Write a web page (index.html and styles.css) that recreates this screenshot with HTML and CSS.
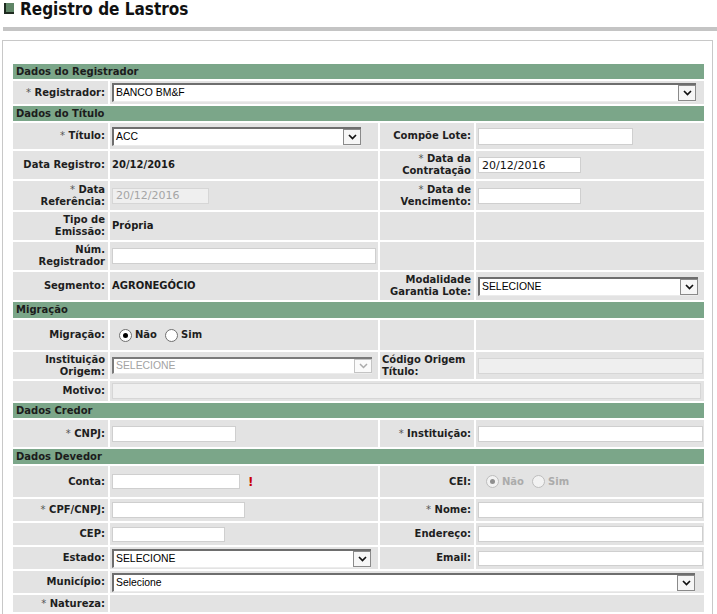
FILE: index.html
```html
<!DOCTYPE html>
<html lang="pt-BR">
<head>
<meta charset="utf-8">
<title>Registro de Lastros</title>
<link rel="stylesheet" href="styles.css">
</head>
<body>
<div class="title"><span class="ico"></span><h1>Registro de Lastros</h1></div>
<div class="rule"></div>
<div class="box">
<table class="form">
<colgroup><col class="c1"><col class="c2"><col class="c3"><col class="c4"></colgroup>
<tr class="sec h15"><td colspan="4">Dados do Registrador</td></tr>
<tr class="h23">
  <td class="lb"><span class="req">*</span> Registrador:</td>
  <td colspan="3"><div class="sel w-reg"><span class="sel-txt">BANCO BM&amp;F</span><span class="sel-btn"><svg width="9" height="6" viewBox="0 0 9 6"><path d="M1 1l3.5 3.5L8 1" fill="none" stroke="#111" stroke-width="1.7"/></svg></span></div></td>
</tr>
<tr class="sec h15"><td colspan="4">Dados do Título</td></tr>
<tr class="h26">
  <td class="lb"><span class="req">*</span> Título:</td>
  <td><div class="sel w-tit"><span class="sel-txt">ACC</span><span class="sel-btn"><svg width="9" height="6" viewBox="0 0 9 6"><path d="M1 1l3.5 3.5L8 1" fill="none" stroke="#111" stroke-width="1.7"/></svg></span></div></td>
  <td class="lb">Compõe Lote:</td>
  <td><input class="inp w-lote" type="text"></td>
</tr>
<tr class="h28">
  <td class="lb">Data Registro:</td>
  <td class="val">20/12/2016</td>
  <td class="lb"><span class="req">*</span> Data da<br>Contratação</td>
  <td><input class="inp w-date" type="text" value="20/12/2016"></td>
</tr>
<tr class="h29">
  <td class="lb"><span class="req">*</span> Data<br>Referência:</td>
  <td><input class="inp w-ref" type="text" value="20/12/2016" disabled></td>
  <td class="lb"><span class="req">*</span> Data de<br>Vencimento:</td>
  <td><input class="inp w-date" type="text"></td>
</tr>
<tr class="h28">
  <td class="lb">Tipo de<br>Emissão:</td>
  <td class="val">Própria</td>
  <td class="lb"></td>
  <td></td>
</tr>
<tr class="h28">
  <td class="lb">Núm.<br>Registrador</td>
  <td><input class="inp w-num" type="text"></td>
  <td class="lb"></td>
  <td></td>
</tr>
<tr class="h28">
  <td class="lb">Segmento:</td>
  <td class="val">AGRONEGÓCIO</td>
  <td class="lb">Modalidade<br>Garantia Lote:</td>
  <td><div class="sel w-mod"><span class="sel-txt">SELECIONE</span><span class="sel-btn"><svg width="9" height="6" viewBox="0 0 9 6"><path d="M1 1l3.5 3.5L8 1" fill="none" stroke="#111" stroke-width="1.7"/></svg></span></div></td>
</tr>
<tr class="sec h16"><td colspan="4">Migração</td></tr>
<tr class="h30">
  <td class="lb">Migração:</td>
  <td><div class="radios mig"><span class="rb on"></span><span class="rl">Não</span><span class="rb"></span><span class="rl">Sim</span></div></td>
  <td class="lb"></td>
  <td></td>
</tr>
<tr class="h27">
  <td class="lb">Instituição<br>Origem:</td>
  <td><div class="sel sel-dis w-inst"><span class="sel-txt">SELECIONE</span><span class="sel-btn"><svg width="9" height="6" viewBox="0 0 9 6"><path d="M1 1l3.5 3.5L8 1" fill="none" stroke="#aaa" stroke-width="1.5"/></svg></span></div></td>
  <td class="lb lb-left">Código Origem<br>Título:</td>
  <td><input class="inp w-right" type="text" disabled></td>
</tr>
<tr class="h20">
  <td class="lb">Motivo:</td>
  <td colspan="3"><input class="inp w-mot" type="text" disabled></td>
</tr>
<tr class="sec h15"><td colspan="4">Dados Credor</td></tr>
<tr class="h27">
  <td class="lb"><span class="req">*</span> CNPJ:</td>
  <td><input class="inp w-cnpj" type="text"></td>
  <td class="lb"><span class="req">*</span> Instituição:</td>
  <td><input class="inp w-right" type="text"></td>
</tr>
<tr class="sec h15"><td colspan="4">Dados Devedor</td></tr>
<tr class="h31">
  <td class="lb">Conta:</td>
  <td><div class="with-warn"><input class="inp w-conta short" type="text"><span class="warn">!</span></div></td>
  <td class="lb">CEI:</td>
  <td><div class="radios cei dis"><span class="rb on"></span><span class="rl">Não</span><span class="rb"></span><span class="rl">Sim</span></div></td>
</tr>
<tr class="h22">
  <td class="lb"><span class="req">*</span> CPF/CNPJ:</td>
  <td><input class="inp w-cpf" type="text"></td>
  <td class="lb"><span class="req">*</span> Nome:</td>
  <td><input class="inp w-right" type="text"></td>
</tr>
<tr class="h22">
  <td class="lb">CEP:</td>
  <td><input class="inp w-cep short" type="text"></td>
  <td class="lb">Endereço:</td>
  <td><input class="inp w-right" type="text"></td>
</tr>
<tr class="h22">
  <td class="lb">Estado:</td>
  <td><div class="sel w-est"><span class="sel-txt">SELECIONE</span><span class="sel-btn"><svg width="9" height="6" viewBox="0 0 9 6"><path d="M1 1l3.5 3.5L8 1" fill="none" stroke="#111" stroke-width="1.7"/></svg></span></div></td>
  <td class="lb">Email:</td>
  <td><input class="inp w-right short" type="text"></td>
</tr>
<tr class="h22">
  <td class="lb">Município:</td>
  <td colspan="3"><div class="sel w-mun"><span class="sel-txt">Selecione</span><span class="sel-btn"><svg width="9" height="6" viewBox="0 0 9 6"><path d="M1 1l3.5 3.5L8 1" fill="none" stroke="#111" stroke-width="1.7"/></svg></span></div></td>
</tr>
<tr class="h17">
  <td class="lb"><span class="req">*</span> Natureza:</td>
  <td colspan="3"></td>
</tr>
</table>
</div>
</body>
</html>
```
FILE: styles.css
```css
html, body {
  margin: 0;
  background: #fff;
}
body {
  font-family: "DejaVu Sans", Verdana, sans-serif;
  font-size: 10px;
  color: #1e1e1e;
}
.title {
  display: flex;
  align-items: flex-start;
  height: 22px;
  padding-left: 4px;
}
.ico {
  box-sizing: border-box;
  width: 10px;
  height: 11px;
  margin: 3px 6px 0 0;
  background: #5f8566;
  border-left: 2px solid #1e2a20;
  border-bottom: 2px solid #1e2a20;
}
h1 {
  margin: 0;
  font-family: "DejaVu Sans Condensed", "Liberation Sans", sans-serif;
  font-weight: bold;
  font-size: 17px;
  line-height: 18px;
  color: #111;
}
.rule {
  height: 4px;
  background: #c4c4c4;
  margin: 5px 0 0 3px;
}
.box {
  margin: 9px 4px 0 2px;
  border: 1px solid #c8c8c8;
  padding: 21px 0 14px 8px;
}
table.form {
  border-collapse: separate;
  border-spacing: 2px;
  table-layout: fixed;
  width: 695px;
}
col.c1 { width: 95px; }
col.c2 { width: 268px; }
col.c3 { width: 94px; }
col.c4 { width: 228px; }

td {
  background: #e3e3e3;
  padding: 0 2px;
  vertical-align: middle;
  line-height: 12px;
}
td.lb {
  text-align: right;
  font-weight: bold;
  padding: 0 3px 0 2px;
}
td.lb-left { text-align: left; }
td.val {
  font-weight: bold;
  color: #1a1a1a;
}
.req {
  font-weight: normal;
  color: #555;
}
tr.sec td {
  background: #7ba689;
  font-weight: bold;
  color: #1c1c1c;
  padding: 0 3px;
}
tr.h15 { height: 15px; }
tr.h16 { height: 16px; }
tr.h17 { height: 17px; }
tr.h20 { height: 20px; }
tr.h22 { height: 22px; }
tr.h23 { height: 23px; }
tr.h26 { height: 26px; }
tr.h27 { height: 27px; }
tr.h28 { height: 28px; }
tr.h29 { height: 29px; }
tr.h30 { height: 30px; }
tr.h31 { height: 31px; }

/* text inputs */
.inp {
  display: block;
  box-sizing: border-box;
  height: 16px;
  margin: 0;
  padding: 0 3px;
  border: 1px solid #cfcfcf;
  border-radius: 0;
  background: #fff;
  font-family: "DejaVu Sans", Verdana, sans-serif;
  font-size: 11px;
  color: #111;
  outline: none;
}
.inp.short { height: 15px; }
.inp:disabled {
  background: #efefef;
  border-color: #d6d6d6;
  color: #a5a5a5;
}
.w-lote { width: 155px; height: 17px; }
.w-date { width: 103px; }
.w-ref { width: 97px; }
.w-num { width: 264px; }
.w-right { width: 225px; }
.w-mot { width: 589px; }
.w-cnpj { width: 124px; }
.w-conta { width: 128px; }
.w-cpf { width: 133px; }
.w-cep { width: 113px; }

/* selects */
.sel {
  display: flex;
  box-sizing: border-box;
  height: 19px;
  border-top: 2px solid #6e6e6e;
  border-left: 2px solid #6e6e6e;
  border-bottom: 1px solid #ececec;
  background: #fff;
  font-family: "Liberation Sans", Arial, sans-serif;
  font-size: 10.4px;
  color: #000;
}
.sel-txt {
  flex: 1;
  display: flex;
  align-items: center;
  padding-left: 2px;
  white-space: nowrap;
}
.sel-btn {
  box-sizing: border-box;
  width: 18px;
  border: 1px solid #8a8a8a;
  background: #f6f6f6;
  display: flex;
  align-items: center;
  justify-content: center;
}
.sel-dis {
  height: 17px;
  border-top-color: #7a7a7a;
  border-left-color: #7a7a7a;
  color: #a3a3a3;
}
.sel-dis .sel-btn {
  border-color: #c4c4c4;
  background: #fafafa;
}
.w-reg { width: 584px; }
.w-tit { width: 249px; }
.w-mod { width: 220px; }
.w-inst { width: 260px; }
.w-est { width: 259px; }
.w-mun { width: 583px; }

/* radios */
.radios {
  display: flex;
  align-items: center;
  font-weight: bold;
}
.radios.mig { padding-left: 7px; }
.radios.cei { padding-left: 8px; }
.rb {
  box-sizing: border-box;
  width: 13px;
  height: 13px;
  border-radius: 50%;
  border: 1px solid #6f6f6f;
  background: #fff;
  display: flex;
  align-items: center;
  justify-content: center;
  margin-right: 3px;
}
.rb.on::after {
  content: "";
  width: 5px;
  height: 5px;
  border-radius: 50%;
  background: #000;
}
.rl { margin-right: 8px; }
.radios.dis { color: #ababab; }
.radios.dis .rb {
  border-color: #bdbdbd;
  background: #f2f2f2;
}
.radios.dis .rb.on::after { background: #8f8f8f; }

.with-warn {
  display: flex;
  align-items: center;
}
.warn {
  color: #c80000;
  font-weight: bold;
  font-size: 12px;
  margin-left: 8px;
}
```
